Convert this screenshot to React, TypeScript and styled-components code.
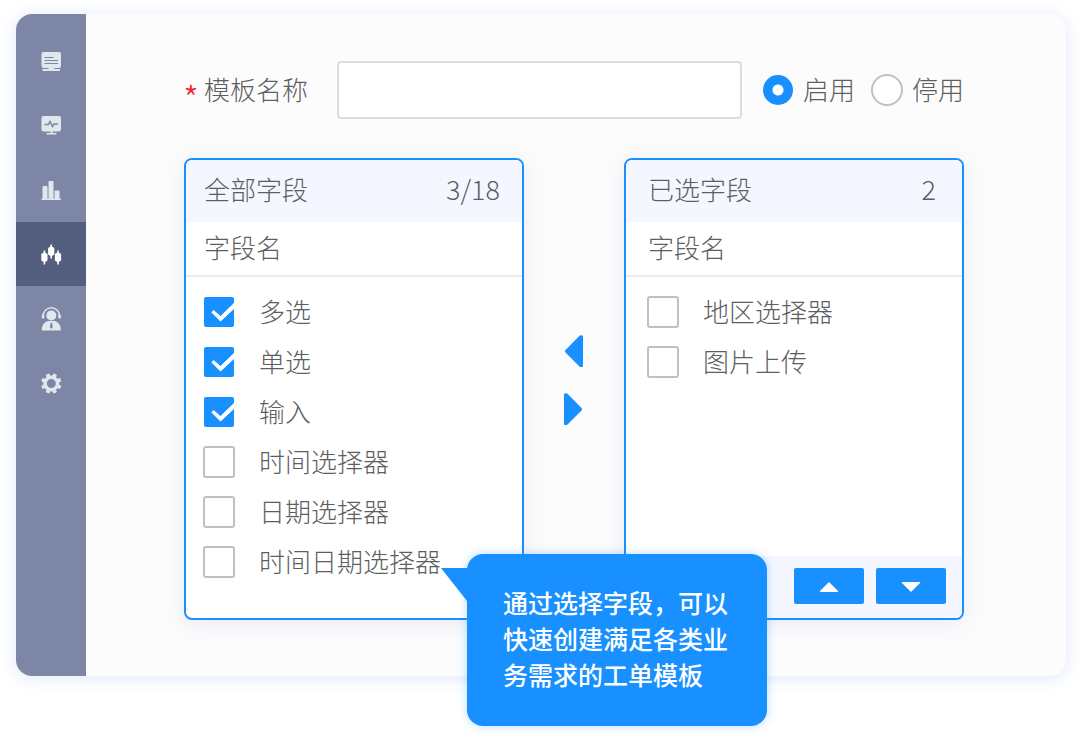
import React, { useState } from "react";
import styled, { createGlobalStyle, css } from "styled-components";

const blue = "#1890ff";

const GlobalStyle = createGlobalStyle`
  * { box-sizing: border-box; }
  body {
    margin: 0;
    background: #ffffff;
    color: #5c5e62;
    font-family: "Noto Sans CJK SC", sans-serif;
    font-size: 26px;
    font-weight: 300;
    line-height: 36px;
  }
  button, input { font: inherit; color: inherit; }
`;

const Page = styled.div`
  padding: 14px 16px 62px;
`;

const Shell = styled.div`
  display: flex;
  border-radius: 16px;
  background: #fcfcfc;
  box-shadow: 0 2px 16px rgba(60, 110, 220, 0.17);
`;

const Sidebar = styled.nav`
  flex: none;
  width: 70px;
  padding-top: 16px;
  border-radius: 16px 0 0 16px;
  background: #7e86a5;
`;

const NavButton = styled.button<{ $active?: boolean }>`
  display: flex;
  align-items: center;
  justify-content: center;
  width: 100%;
  height: 64px;
  padding: 2px 0 0;
  border: 0;
  background: ${(p) => (p.$active ? "#545f7f" : "transparent")};
  color: ${(p) => (p.$active ? "#ffffff" : "#dfe7ef")};
  cursor: pointer;
`;

const Main = styled.main`
  flex: 1;
  min-width: 0;
  padding: 47px 102px 56px 98px;
`;

const FormRow = styled.div`
  display: flex;
  align-items: center;
  margin-bottom: 39px;
`;

const Caption = styled.span`
  padding-bottom: 2px;
`;

const NameLabel = styled.label`
  display: flex;
  align-items: center;
  gap: 6px;
  margin-right: 29px;
  white-space: nowrap;
`;

const Required = styled.span`
  display: flex;
  justify-content: center;
  width: 14px;
  padding-top: 14px;
  color: #f5222d;
  font-size: 36px;
`;

const NameInput = styled.input`
  flex: 1;
  min-width: 0;
  height: 58px;
  padding: 0 16px;
  border: 2px solid #dcdcdc;
  border-radius: 4px;
  background: #ffffff;
  outline: none;
`;

const RadioGroup = styled.div`
  display: flex;
  gap: 16px;
  margin-left: 20px;
`;

const RadioLabel = styled.label`
  display: flex;
  align-items: center;
  gap: 9px;
  white-space: nowrap;
  cursor: pointer;
`;

const Radio = styled.input`
  appearance: none;
  flex: none;
  width: 32px;
  height: 32px;
  margin: 0;
  border: 2px solid #c0c0c0;
  border-radius: 50%;
  background: #ffffff;
  &:checked {
    border: 1px solid transparent;
    background: radial-gradient(circle, #ffffff 0 5px, ${blue} 6px) padding-box;
  }
`;

const Transfer = styled.div`
  display: grid;
  grid-template-columns: 1fr 100px 1fr;
`;

const Column = styled.div`
  position: relative;
  display: flex;
`;

const PanelBox = styled.section<{ $inset: number }>`
  --inset: ${(p) => p.$inset}px;
  flex: 1;
  display: flex;
  flex-direction: column;
  overflow: hidden;
  border: 2px solid ${blue};
  border-radius: 8px;
  background: #ffffff;
  box-shadow: 0 4px 24px rgba(50, 90, 170, 0.1);
`;

const PanelHeader = styled.header`
  display: flex;
  align-items: center;
  justify-content: space-between;
  height: 62px;
  padding: 0 calc(var(--inset) + 4px) 4px var(--inset);
  background: #f4f7ff;
`;

const PanelTitle = styled.h2`
  margin: 0;
  font: inherit;
`;

const Count = styled.span`
  font-size: 27px;
`;

const SubHeader = styled.div`
  height: 55px;
  padding: 7px var(--inset);
  border-bottom: 2px solid #e8eaee;
`;

const List = styled.ul`
  flex: 1;
  margin: 0;
  padding: 10px calc(var(--inset) - 1px) 31px;
  list-style: none;
`;

const Item = styled.label`
  display: flex;
  align-items: center;
  gap: 24px;
  height: 50px;
  white-space: nowrap;
  cursor: pointer;
`;

const boxSize = css`
  width: 32px;
  height: 32px;
`;

const CheckWrap = styled.span`
  ${boxSize}
  flex: none;
  display: grid;
  > * { grid-area: 1 / 1; }
`;

const CheckInput = styled.input`
  ${boxSize}
  appearance: none;
  margin: 0;
  border: 2px solid #c0c0c0;
  border-radius: 3px;
  background: #ffffff;
  &:checked {
    border: 1px solid transparent;
    background: ${blue} padding-box;
  }
  & + svg { visibility: hidden; }
  &:checked + svg { visibility: visible; }
`;

const CheckMark = styled.svg`
  ${boxSize}
  pointer-events: none;
`;

const Movers = styled.div`
  display: flex;
  flex-direction: column;
  align-items: center;
  justify-content: center;
  gap: 26px;
  padding-bottom: 18px;
`;

const MoveButton = styled.button`
  display: flex;
  padding: 0;
  border: 0;
  background: none;
  color: ${blue};
  cursor: pointer;
`;

const PanelFooter = styled.footer`
  display: flex;
  justify-content: flex-end;
  gap: 12px;
  height: 62px;
  padding: 12px 16px;
  background: #f4f7ff;
`;

const OrderButton = styled.button`
  display: flex;
  align-items: center;
  justify-content: center;
  width: 70px;
  height: 36px;
  padding: 2px 0 0;
  border: 0;
  border-radius: 2px;
  background: ${blue};
  color: #ffffff;
  cursor: pointer;
`;

const Bubble = styled.div`
  position: absolute;
  z-index: 1;
  top: 396px;
  left: calc(100% - 57px);
  width: 300px;
  padding: 30px 36px 34px;
  border-radius: 16px;
  background: ${blue};
  box-shadow: 0 0 10px rgba(24, 144, 255, 0.32);
  color: #ffffff;
  font-size: 25px;
  font-weight: 500;
`;

const BubbleText = styled.p`
  margin: 0;
  white-space: nowrap;
`;

const Tail = styled.svg`
  position: absolute;
  top: 14px;
  right: 100%;
`;

const Icon = ({ children }: { children: React.ReactNode }) => (
  <svg width="24" height="24" viewBox="0 0 24 24" fill="currentColor" aria-hidden="true">
    {children}
  </svg>
);

const cut = "#7e86a5";

const navItems = [
  {
    name: "工单",
    icon: (
      <Icon>
        <rect x="2.500" y="1" width="19.500" height="16" rx="2" />
        <path d="M5.500 6.500h9M5.500 9.500h13.500M5.500 12.500h13.500" stroke={cut} strokeWidth="1.100" />
        <path d="M9.500 17h6v1h5.500v2H3.500v-2h6z" />
      </Icon>
    ),
  },
  {
    name: "监控",
    icon: (
      <Icon>
        <rect x="2.500" y="1" width="19.500" height="15.500" rx="2" />
        <path d="M5.500 9.500h4L11 6.500l2.500 5 1.500-2.500h4" stroke={cut} strokeWidth="1.500" fill="none" />
        <path d="M11.500 16h2v2h4v1.500h-10V18h4z" />
      </Icon>
    ),
  },
  {
    name: "统计",
    icon: (
      <Icon>
        <rect x="3.500" y="7" width="5" height="13" rx="1" />
        <rect x="9.500" y="2" width="5" height="18" rx="1" />
        <rect x="15.500" y="11.500" width="5" height="8.500" rx="1" />
        <rect x="2.500" y="19.500" width="19.500" height="1.500" />
      </Icon>
    ),
  },
  {
    name: "字段模板",
    icon: (
      <Icon>
        <path d="M4.600 7.500h1.600v2l2.300 1.500v6.500L6.200 19v2.500H4.600V19l-2.300-1.500V11l2.300-1.500z" />
        <path d="M11.400 1.500H13v2L15.300 5v6.500L13 13v2.500h-1.600V13L9.100 11.500V5l2.300-1.500z" />
        <path d="M18.200 7.500h1.600v2l2.300 1.500v6.500L19.800 19v2.500h-1.600V19l-2.300-1.500V11l2.300-1.500z" />
      </Icon>
    ),
  },
  {
    name: "客服",
    icon: (
      <Icon>
        <circle cx="12.300" cy="8.500" r="5" />
        <path d="M4 11V9a8.300 8.300 0 0 1 16.600 0v2" stroke="currentColor" strokeWidth="1.400" fill="none" />
        <rect x="2.800" y="7.500" width="2.500" height="4" rx="1" />
        <rect x="19.300" y="7.500" width="2.500" height="4" rx="1" />
        <path d="M2.800 23.500c0-5.500 2.500-8.500 6-9.500h7c3.500 1 6 4 6 9.500z" />
        <path d="M11.800 15.500h1l1 4.500-1.500 2-1.500-2z" fill={cut} />
      </Icon>
    ),
  },
  {
    name: "设置",
    icon: (
      <Icon>
        <circle cx="12.300" cy="12.500" r="6.200" fill="none" stroke="currentColor" strokeWidth="3.400" />
        {[22.5, 67.5, 112.5, 157.5, 202.5, 247.5, 292.5, 337.5].map((turn) => (
          <rect
            key={turn}
            x="10.300"
            y="2.300"
            width="4"
            height="4"
            rx="1"
            transform={`rotate(${turn} 12.300 12.500)`}
          />
        ))}
      </Icon>
    ),
  },
];

const CheckItem = ({ text, initial }: { text: string; initial?: boolean }) => (
  <li>
    <Item>
      <CheckWrap>
        <CheckInput type="checkbox" defaultChecked={initial} />
        <CheckMark viewBox="0 0 32 32" aria-hidden="true">
          <path d="M9 16.500L10.500 14.500 17.500 20.500 31 7.500V12.500L17.500 25z" fill="#ffffff" stroke="#ffffff" strokeWidth="1" strokeLinejoin="round" />
        </CheckMark>
      </CheckWrap>
      <Caption>{text}</Caption>
    </Item>
  </li>
);

const allFields = [
  { text: "多选", on: true },
  { text: "单选", on: true },
  { text: "输入", on: true },
  { text: "时间选择器" },
  { text: "日期选择器" },
  { text: "时间日期选择器" },
];

const chosenFields = ["地区选择器", "图片上传"];

export default function App() {
  const [active, setActive] = useState(3);
  return (
    <Page>
      <GlobalStyle />
      <Shell>
        <Sidebar>
          {navItems.map((item, i) => (
            <NavButton
              key={item.name}
              type="button"
              aria-label={item.name}
              $active={i === active}
              onClick={() => setActive(i)}
            >
              {item.icon}
            </NavButton>
          ))}
        </Sidebar>
        <Main>
          <FormRow>
            <NameLabel htmlFor="template-name">
              <Required>*</Required>
              <Caption>模板名称</Caption>
            </NameLabel>
            <NameInput id="template-name" type="text" />
            <RadioGroup>
              <RadioLabel>
                <Radio type="radio" name="status" defaultChecked />
                <Caption>启用</Caption>
              </RadioLabel>
              <RadioLabel>
                <Radio type="radio" name="status" />
                <Caption>停用</Caption>
              </RadioLabel>
            </RadioGroup>
          </FormRow>
          <Transfer>
            <Column>
              <PanelBox $inset={18}>
                <PanelHeader>
                  <PanelTitle>全部字段</PanelTitle>
                  <Count>3/18</Count>
                </PanelHeader>
                <SubHeader>字段名</SubHeader>
                <List>
                  {allFields.map((f) => (
                    <CheckItem key={f.text} text={f.text} initial={f.on} />
                  ))}
                </List>
              </PanelBox>
              <Bubble>
                <Tail width="26" height="33" viewBox="0 0 26 33" aria-hidden="true">
                  <path d="M0 0h26v33z" fill={blue} />
                </Tail>
                <BubbleText>
                  通过选择字段，可以
                  <br />
                  快速创建满足各类业
                  <br />
                  务需求的工单模板
                </BubbleText>
              </Bubble>
            </Column>
            <Movers>
              <MoveButton type="button" aria-label="移回左侧">
                <svg width="20" height="32" viewBox="0 0 20 32" fill="currentColor">
                  <path d="M1.500 15Q.5 16 1.500 17.500L15.500 31.500Q17 32.500 19 31.500V.8Q17-.5 15.500.8z" />
                </svg>
              </MoveButton>
              <MoveButton type="button" aria-label="移到右侧">
                <svg width="20" height="32" viewBox="0 0 20 32" fill="currentColor">
                  <path d="M17.500 15Q18.500 16 17.500 17.500L3.500 31.500Q2 32.500 0 31.500V.8Q2-.5 3.500.8z" />
                </svg>
              </MoveButton>
            </Movers>
            <Column>
              <PanelBox $inset={22}>
                <PanelHeader>
                  <PanelTitle>已选字段</PanelTitle>
                  <Count>2</Count>
                </PanelHeader>
                <SubHeader>字段名</SubHeader>
                <List>
                  {chosenFields.map((text) => (
                    <CheckItem key={text} text={text} />
                  ))}
                </List>
                <PanelFooter>
                  <OrderButton type="button" aria-label="上移">
                    <svg width="18" height="10" viewBox="0 0 18 10" fill="currentColor">
                      <path d="M9 0l9 9v1H0V9z" />
                    </svg>
                  </OrderButton>
                  <OrderButton type="button" aria-label="下移">
                    <svg width="18" height="10" viewBox="0 0 18 10" fill="currentColor">
                      <path d="M9 10l9-9V0H0v1z" />
                    </svg>
                  </OrderButton>
                </PanelFooter>
              </PanelBox>
            </Column>
          </Transfer>
        </Main>
      </Shell>
    </Page>
  );
}
